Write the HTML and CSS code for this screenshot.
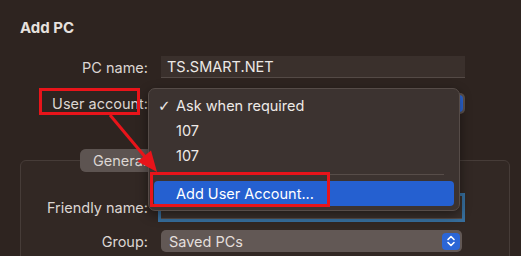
FILE: index.html
```html
<!DOCTYPE html>
<html lang="en">
<head>
    <meta charset="UTF-8">
    <title>Add PC</title>
    <link rel="stylesheet" href="styles.css">
</head>
<body>
    <div class="dialog">
        <h1>Add PC</h1>

        <div class="rows">
            <label class="label">PC name:</label>
            <div class="field">TS.SMART.NET</div>

            <label class="label">User account:</label>
            <div class="popup">
                <span></span>
                <span class="stepper"></span>
            </div>
        </div>

        <div class="group-wrap">
            <div class="tabs">
                <span class="tab active">General</span>
            </div>
            <div class="group-box">
                <div class="rows inner">
                    <label class="label">Friendly name:</label>
                    <div class="field focus"></div>

                    <label class="label">Group:</label>
                    <div class="popup grey">
                        <span>Saved PCs</span>
                        <span class="stepper">
                            <svg width="10" height="14" viewBox="0 0 10 14">
                                <path d="M2 5.5 L5 2.5 L8 5.5 M2 8.5 L5 11.5 L8 8.5" fill="none" stroke="#fff" stroke-width="1.6" stroke-linecap="round" stroke-linejoin="round"/>
                            </svg>
                        </span>
                    </div>
                </div>
            </div>
        </div>

        <!-- open menu of the user account popup -->
        <div class="menu">
            <div class="item"><span class="check">✓</span>Ask when required</div>
            <div class="item"><span class="check"></span>107</div>
            <div class="item"><span class="check"></span>107</div>
            <div class="separator"></div>
            <div class="item selected"><span class="check"></span>Add User Account...</div>
        </div>

        <!-- annotations -->
        <div class="mark mark-account"></div>
        <div class="mark mark-add"></div>
        <svg class="arrow" width="521" height="256" viewBox="0 0 521 256">
            <line x1="110" y1="115" x2="146" y2="158" stroke="#e8141a" stroke-width="3"/>
            <polygon points="157,172 137.5,161.5 151,150.5" fill="#e8141a"/>
        </svg>
    </div>
</body>
</html>
```

FILE: styles.css
```css
body {
    margin: 0;
    width: 521px;
    height: 256px;
    overflow: hidden;
    background: #2e2420;
    color: #e4dfdc;
    font-family: Inter, "Noto Sans", sans-serif;
    font-size: 14.5px;
}
.dialog {
    position: relative;
    padding: 20px 0 0 20px;
    height: 256px;
    box-sizing: border-box;
    overflow: hidden;
}
h1 {
    margin: 0;
    font-size: 15px;
    font-weight: 700;
    line-height: 16px;
    color: #e6e1de;
}
.rows {
    display: grid;
    grid-template-columns: 128px 304px;
    column-gap: 13px;
    row-gap: 15px;
    align-items: center;
    margin-top: 20px;
}
.label {
    text-align: right;
    color: #dcd6d3;
}
.field {
    height: 22px;
    line-height: 22px;
    padding: 0 6px;
    background: #3a302c;
    border-bottom: 1px solid #544a46;
    box-sizing: border-box;
    color: #ece8e5;
}
.popup {
    height: 21px;
    display: flex;
    align-items: center;
    justify-content: space-between;
    padding: 0 2px 0 8px;
    border-radius: 5px;
    background: #5c524e;
}
.stepper {
    width: 18px;
    height: 17px;
    border-radius: 4px;
    background: #2b66d6;
    display: flex;
    align-items: center;
    justify-content: center;
}
.group-wrap {
    margin-top: 35px;
    width: 490px;
}
.tabs {
    display: flex;
    margin-left: 60px;
    margin-bottom: -12px;
    position: relative;
    height: 23px;
    width: 300px;
    border-radius: 6px;
    background: #4a403d;
}
.tab {
    padding: 0 13px;
    line-height: 23px;
    color: #dcd6d3;
}
.tab.active {
    background: #5d5451;
    border-radius: 6px;
}
.group-box {
    height: 100px;
    border: 1px solid #463c38;
    border-radius: 6px;
    background: #322824;
}
.rows.inner {
    grid-template-columns: 127px 301px;
    row-gap: 11px;
    margin-top: 35px;
}
.field.focus {
    height: 23px;
    box-shadow: 0 0 0 3px #376f9e;
}
.popup.grey {
    height: 22px;
    background: #625855;
}
.menu {
    position: absolute;
    left: 148px;
    top: 88px;
    width: 312px;
    box-sizing: border-box;
    padding: 4px 5px;
    border: 1px solid #564c48;
    border-radius: 7px;
    background: #3c3330;
    box-shadow: 0 4px 12px rgba(0,0,0,0.45);
    color: #eeeae7;
}
.item {
    display: flex;
    align-items: center;
    height: 25px;
    padding-left: 4px;
    border-radius: 4px;
}
.check {
    width: 18px;
    font-family: "DejaVu Sans", sans-serif;
    font-size: 15px;
}
.item.selected {
    background: #2560d0;
    color: #fff;
}
.separator {
    height: 1px;
    margin: 6px 10px 6px 4px;
    background: #574d49;
}
.mark {
    position: absolute;
    border: 3px solid #e8141a;
    box-sizing: border-box;
}
.mark-account {
    left: 39px;
    top: 88px;
    width: 101px;
    height: 27px;
}
.mark-add {
    left: 150px;
    top: 172px;
    width: 180px;
    height: 35px;
}
.arrow {
    position: absolute;
    left: 0;
    top: 0;
}
```
